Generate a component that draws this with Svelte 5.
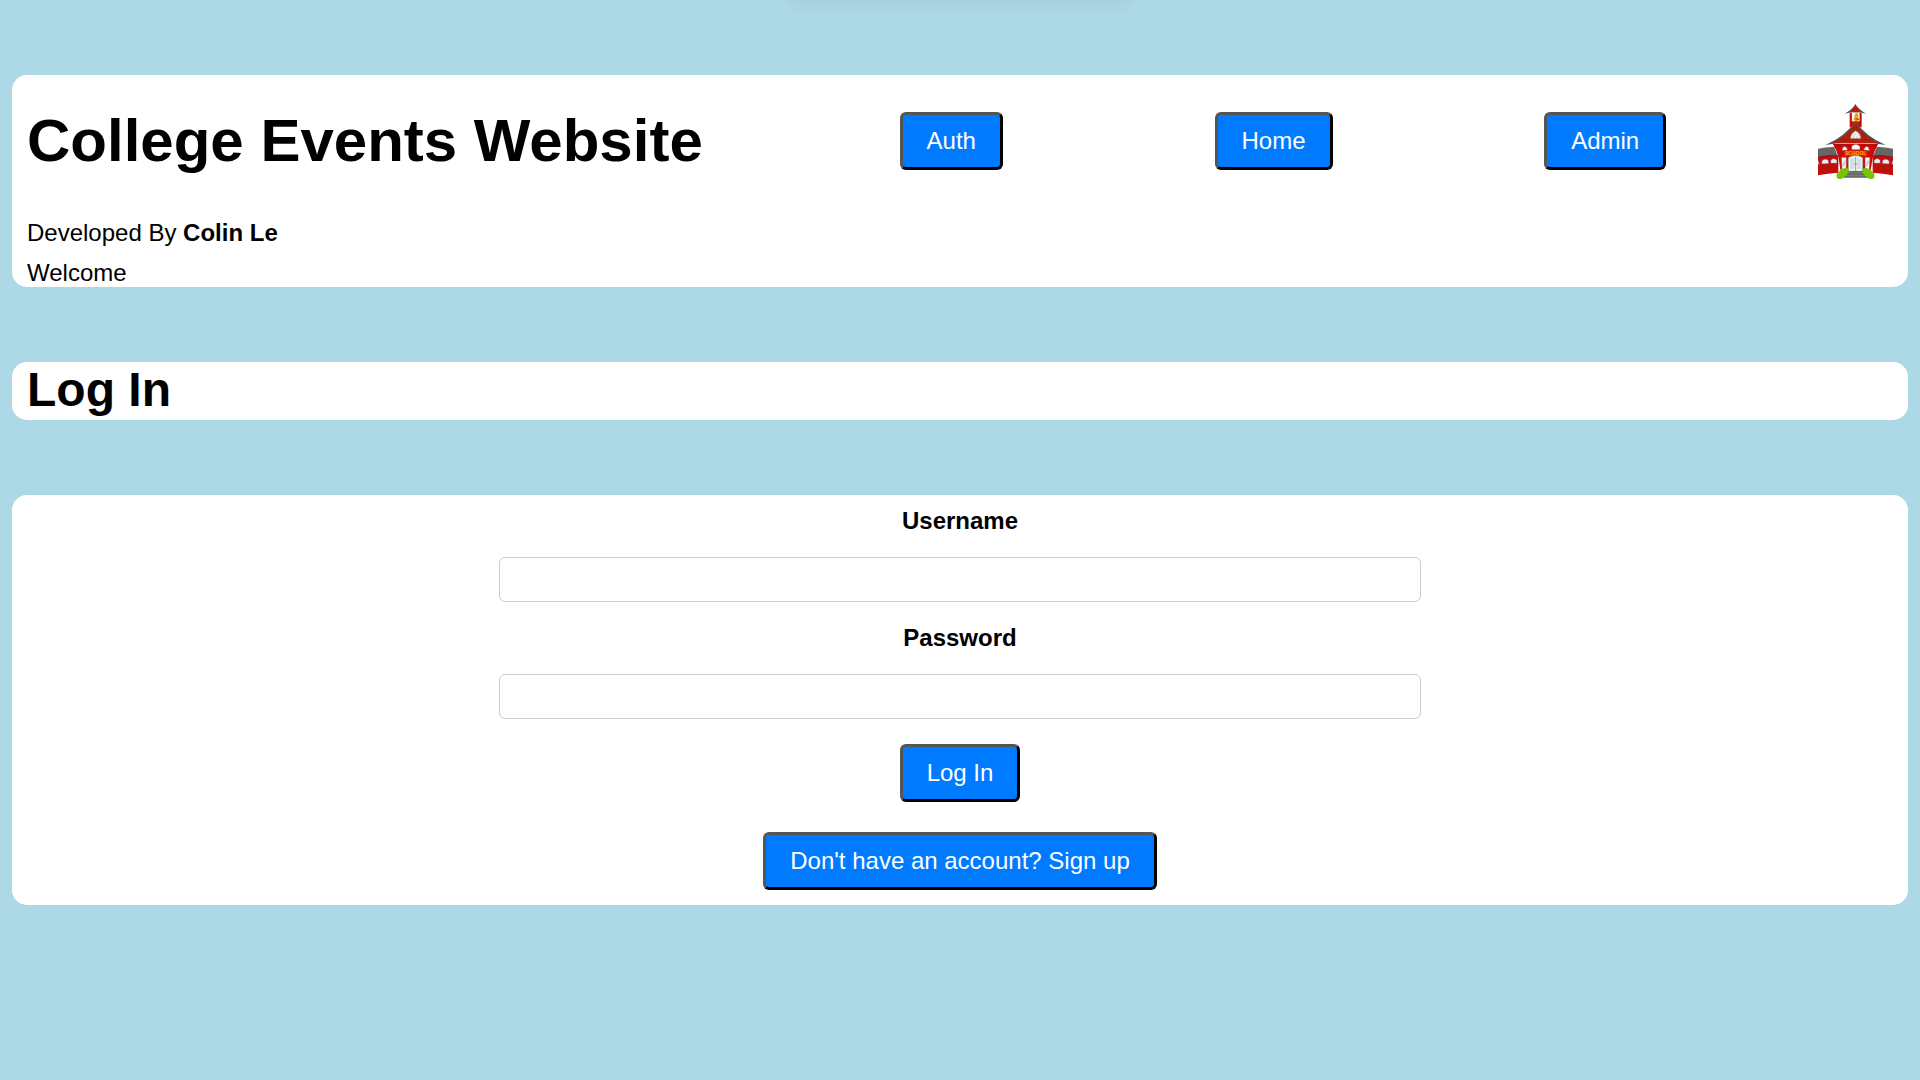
<script>
  let username = $state('');
  let password = $state('');
  const links = ['Auth', 'Home', 'Admin'];
</script>

<div class="notch"></div>

<div class="page">
  <header class="card">
    <div class="bar">
      <h1>College Events Website</h1>
      <nav>
        {#each links as link}
          <button type="button">{link}</button>
        {/each}
      </nav>
      <svg class="logo" viewBox="39 42 225 225" role="img" aria-label="School">
        <!-- side wings -->
        <path d="M39 200Q75 192 100 198V248Q70 250 39 256Z" fill="#c90a0a" />
        <path d="M264 200Q228 192 203 198V248Q233 250 264 256Z" fill="#c90a0a" />
        <path d="M39 176Q66 170 88 171L98 199Q68 195 39 202Z" fill="#666" />
        <path d="M264 176Q237 170 215 171L205 199Q235 195 264 202Z" fill="#666" />
        <path d="M39 202Q70 194 100 198M264 202Q233 194 203 198" fill="none" stroke="#7c1410" stroke-width="3" />
        <path d="M50 241L74 237L92 240M40 228H70M253 241L229 237L211 240M263 228H233" fill="none" stroke="#8b2a09" stroke-width="4" />
        <g fill="#e2f0f3" stroke="#8d2222" stroke-width="1.5">
          <path d="M50 222V213Q61 202 71 212V221ZM77 220V211Q86 200 96 211V220ZM253 222V213Q242 202 232 212V221ZM226 220V211Q217 200 207 211V220Z" />
          <path d="M39 211Q44 214 43 223L39 224ZM264 211Q259 214 260 223L264 224Z" />
        </g>
        <!-- main block -->
        <path d="M84 162H219Q207 184 203 204L195 252H108L101 204Q97 184 84 162Z" fill="#cf0808" />
        <path d="M84 162H219L214 171H90Z" fill="#b90b08" />
        <!-- bell tower -->
        <path d="M134 68H170V112H134Z" fill="#d20b0b" />
        <path d="M140 68H164V94H140Z" fill="#fff" />
        <path d="M139 68V104M166 68V104" stroke="#8d1515" stroke-width="2" />
        <path d="M155 68Q147 70 148 83L145 90Q153 96 163 91L160 83Q162 70 155 68Z" fill="#f5a20b" />
        <path d="M151 86L162 88M154 92V97" stroke="#a95709" stroke-width="4" />
        <path d="M151 42Q161 59 184 71L164 67H139L119 71Q143 58 151 42Z" fill="#555" />
        <path d="M151 45L166 65H136Z" fill="#b51a11" />
        <!-- gable roof -->
        <path d="M151 94Q181 139 242 165L205 160H97L61 165Q122 139 151 94Z" fill="#555" />
        <path d="M151 98Q174 136 220 160H82Q128 136 151 98Z" fill="#b71d0d" />
        <path d="M142 115H160M124 134H137M168 133H182M105 150H129M177 149H202" stroke="#7f3308" stroke-width="5" />
        <path d="M136 146Q136 130 152 122Q168 130 168 146Z" fill="#e7f3f3" stroke="#a7554d" stroke-width="2" />
        <path d="M143 143L152 129M153 145L162 135" stroke="#b9dcdc" stroke-width="3" />
        <!-- upper windows -->
        <g fill="#edf6f5" stroke="#a83a34" stroke-width="1.5">
          <path d="M140 179V169Q152 157 165 169V179ZM111 182Q111 171 119 169Q127 172 128 180ZM193 182Q193 171 185 169Q177 172 176 180Z" />
          <path d="M109 202H124V239H111ZM195 202H180V239H193Z" />
        </g>
        <path d="M114 229L120 212M184 229L190 212" stroke="#aacdd0" stroke-width="4" />
        <!-- sign -->
        <path d="M118 184Q152 177 187 184L185 200Q152 192 119 200Z" fill="#df2b05" />
        <text x="152" y="196" text-anchor="middle" font-size="15" font-weight="bold" fill="#ffa514">SCHOOL</text>
        <!-- door -->
        <path d="M130 244V203Q152 190 173 203V244Z" fill="#f3f5f4" stroke="#a99a97" stroke-width="2" />
        <path d="M135 237V207L148 203V237ZM156 237V203L168 207V237Z" fill="#c9e4e4" />
        <path d="M152 200V244M147 222H157" stroke="#969999" stroke-width="3" />
        <!-- steps -->
        <path d="M125 244H178L193 263H110Z" fill="#656565" />
        <path d="M121 249H183M116 257H188" stroke="#969696" stroke-width="2" />
        <!-- bushes -->
        <path d="M104 267Q94 267 95 259Q92 250 102 246Q104 235 115 236Q123 230 130 237Q135 244 128 250Q124 258 117 261Q113 268 104 267Z" fill="#76c505" />
        <path d="M199 267Q209 267 208 259Q211 250 201 246Q199 235 188 236Q180 230 173 237Q168 244 175 250Q179 258 186 261Q190 268 199 267Z" fill="#76c505" />
      </svg>
    </div>
    <p>Developed By <strong>Colin Le</strong></p>
    <p>Welcome</p>
  </header>

  <section class="card">
    <h2>Log In</h2>
  </section>

  <form class="card" onsubmit={(e) => e.preventDefault()}>
    <label for="username">Username</label>
    <input id="username" type="text" bind:value={username} />
    <label for="password">Password</label>
    <input id="password" type="password" bind:value={password} />
    <button type="submit">Log In</button>
    <button type="button">Don't have an account? Sign up</button>
  </form>
</div>

<style>
  :global(body) {
    background: #add8e6;
    color: #000;
    font: 24px/27px Arial, 'Liberation Sans', sans-serif;
  }

  /* Soft shadow of a panel tucked above the top edge */
  .notch {
    position: absolute;
    top: -12px;
    left: 50%;
    width: 340px;
    height: 10px;
    margin-left: -170px;
    border-radius: 6px;
    box-shadow: 0 1px 18px rgba(0, 0, 0, 0.12);
  }

  .page {
    display: flex;
    flex-direction: column;
    gap: 75px;
    padding: 75px 12px;
  }

  .card {
    padding: 0 15px;
    border-radius: 15px;
    background: #fff;
  }

  header {
    display: flex;
    flex-direction: column;
    gap: 13px;
  }

  header.card {
    padding-bottom: 1px;
  }

  .bar {
    display: flex;
    align-items: center;
    height: 74px;
    padding: 29px 0 28px;
  }

  h1,
  h2,
  p {
    margin: 0;
  }

  h1 {
    font-size: 60px;
    line-height: 68px;
  }

  h2 {
    padding-bottom: 2px;
    font-size: 48px;
    line-height: 56px;
  }

  nav {
    display: flex;
    flex: 1;
    justify-content: space-around;
    margin: 0 46px 0 91px;
  }

  .logo {
    flex: none;
    align-self: flex-start;
    width: 75px;
    height: 75px;
  }

  button {
    padding: 12px 24px;
    border: 3px solid;
    border-color: #555 #000 #000 #555;
    border-radius: 6px;
    background: #007bff;
    color: #fff;
    font: inherit;
    line-height: 28px;
    cursor: pointer;
  }

  form {
    display: flex;
    flex-direction: column;
    align-items: center;
  }

  form.card {
    padding: 12px 15px 15px;
  }

  label {
    font-weight: bold;
  }

  input {
    box-sizing: border-box;
    width: calc(50% - 11px);
    height: 45px;
    margin: 23px 0 22px;
    padding: 8px 12px;
    border: 1px solid #ccc;
    border-radius: 6px;
    background: #fff;
    font: inherit;
  }

  form button {
    margin-top: 3px;
  }

  form button + button {
    margin-top: 30px;
  }
</style>
